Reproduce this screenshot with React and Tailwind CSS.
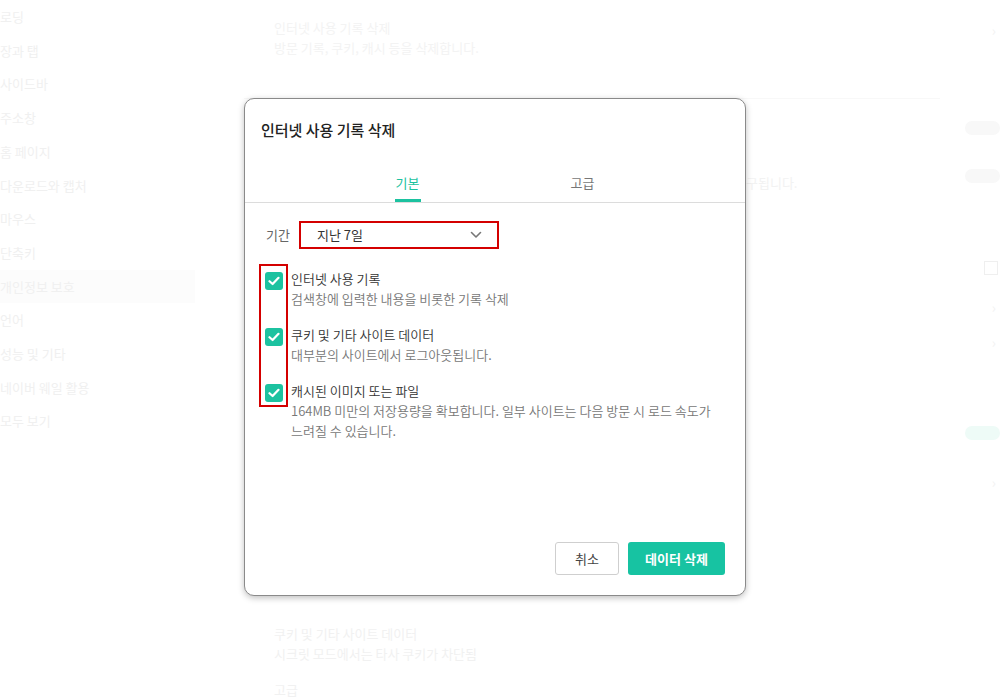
import React, { useState } from "react";

const font = { fontFamily: '"Noto Sans CJK KR", "Noto Sans", sans-serif' };

const sideItems = [
  "로딩", "장과 탭", "사이드바", "주소창", "홈 페이지", "다운로드와 캡처",
  "마우스", "단축키", "개인정보 보호", "언어", "성능 및 기타", "네이버 웨일 활용", "모두 보기",
];

const options = [
  { title: "인터넷 사용 기록", desc: "검색창에 입력한 내용을 비롯한 기록 삭제" },
  { title: "쿠키 및 기타 사이트 데이터", desc: "대부분의 사이트에서 로그아웃됩니다." },
  {
    title: "캐시된 이미지 또는 파일",
    desc: "164MB 미만의 저장용량을 확보합니다. 일부 사이트는 다음 방문 시 로드 속도가 느려질 수 있습니다.",
  },
];

function Check() {
  return (
    <div className="w-[18px] h-[18px] rounded-[3px] bg-[#1cc2a0] flex items-center justify-center">
      <svg width="12" height="10" viewBox="0 0 12 10" fill="none">
        <path d="M1.5 5.2 4.6 8 10.5 1.8" stroke="white" strokeWidth="2.2" strokeLinecap="round" strokeLinejoin="round" />
      </svg>
    </div>
  );
}

function App() {
  const [tab, setTab] = useState("basic");

  return (
    <div className="relative w-[1000px] h-[700px] overflow-hidden bg-white" style={font}>
      {/* faded settings page behind the dialog */}
      <div className="flex h-full">
        <div className="w-[195px] shrink-0 flex flex-col text-[13px] text-[#f0f0f0]">
          {sideItems.map((s, i) => (
            <div key={s} className={`h-[33.7px] flex items-center ${i === 8 ? "bg-[#fcfcfc]" : ""}`}>
              {s}
            </div>
          ))}
        </div>
        <div className="flex-1 pl-[79px] text-[13px] text-[#f3f3f3]">
          <div className="pt-[18px] leading-[20px]">
            <div>인터넷 사용 기록 삭제</div>
            <div>방문 기록, 쿠키, 캐시 등을 삭제합니다.</div>
          </div>
          <div className="mt-[40px] mr-[60px] border-t border-[#f8f8f8] -ml-[30px]" />
        </div>
      </div>

      {/* faded right column */}
      <div className="absolute right-[4px] top-[20px] text-[#f2f2f2] text-[14px]">›</div>
      <div className="absolute right-0 top-[121px] w-[35px] h-[14px] rounded-full bg-[#f8f8f8]" />
      <div className="absolute right-0 top-[169px] w-[35px] h-[14px] rounded-full bg-[#f8f8f8]" />
      <div className="absolute left-[746px] top-[173px] text-[13px] text-[#f2f2f2]">구됩니다.</div>
      <div className="absolute right-[2px] top-[261px] w-[14px] h-[14px] border border-[#efefef]" />
      <div className="absolute right-[4px] top-[297px] text-[#f2f2f2] text-[14px]">›</div>
      <div className="absolute right-[4px] top-[332px] text-[#f2f2f2] text-[14px]">›</div>
      <div className="absolute right-0 top-[426px] w-[35px] h-[14px] rounded-full bg-[#eefbf7]" />
      <div className="absolute right-[4px] top-[472px] text-[#f2f2f2] text-[14px]">›</div>
      <div className="absolute left-[274px] top-[624px] text-[13px] leading-[20px] text-[#f1f1f1]">
        <div>쿠키 및 기타 사이트 데이터</div>
        <div>시크릿 모드에서는 타사 쿠키가 차단됨</div>
        <div className="mt-[16px]">고급</div>
      </div>

      {/* dialog */}
      <div className="absolute left-[244px] top-[98px] w-[502px] h-[498px] bg-white border border-[#8a8a8a] rounded-[10px] shadow-[0_2px_6px_rgba(0,0,0,0.25)] flex flex-col">
        <div className="pl-[16px] pt-[20px] text-[15px] font-medium text-[#222]">인터넷 사용 기록 삭제</div>

        <div className="mt-[31px] flex justify-center border-b border-[#dcdcdc]">
          <button
            onClick={() => setTab("basic")}
            className={`w-[175px] flex flex-col items-center text-[13px] ${tab === "basic" ? "text-[#1cc2a0]" : "text-[#777]"}`}
          >
            <span className="leading-[20px]">기본</span>
            <span className={`mt-[6px] w-[26px] h-[3px] ${tab === "basic" ? "bg-[#1cc2a0]" : "bg-transparent"}`} />
          </button>
          <button
            onClick={() => setTab("adv")}
            className={`w-[175px] flex flex-col items-center text-[13px] ${tab === "adv" ? "text-[#1cc2a0]" : "text-[#777]"}`}
          >
            <span className="leading-[20px]">고급</span>
            <span className={`mt-[6px] w-[26px] h-[3px] ${tab === "adv" ? "bg-[#1cc2a0]" : "bg-transparent"}`} />
          </button>
        </div>

        <div className="pl-[21px] pt-[18px] flex items-center">
          <span className="text-[13px] text-[#666]">기간</span>
          <div className="ml-[9px] w-[200px] h-[28px] border-2 border-[#d40000] flex items-center justify-between pl-[16px] pr-[15px]">
            <span className="text-[13px] text-[#333]">지난 7일</span>
            <svg width="12" height="8" viewBox="0 0 12 8" fill="none">
              <path d="M1.5 1.5 6 6l4.5-4.5" stroke="#777" strokeWidth="1.6" strokeLinecap="round" strokeLinejoin="round" />
            </svg>
          </div>
        </div>

        <div className="mt-[15px] ml-[14px] flex">
          <div className="w-[29px] h-[143px] border-2 border-[#d40000] flex flex-col items-center pt-[6px] gap-[38px]">
            <Check />
            <Check />
            <Check />
          </div>
          <div className="ml-[3px] mt-[5px] flex flex-col gap-[16px] text-[13px] leading-[20px] w-[432px] font-[350]">
            {options.map((o) => (
              <div key={o.title}>
                <div className="text-[#333]">{o.title}</div>
                <div className="text-[#777]">{o.desc}</div>
              </div>
            ))}
          </div>
        </div>

        <div className="mt-auto mb-[20px] mr-[20px] flex justify-end gap-[9px]">
          <button className="w-[64px] h-[33px] border border-[#cfcfcf] rounded-[3px] text-[13px] text-[#444] bg-white">취소</button>
          <button className="w-[97px] h-[33px] rounded-[3px] text-[13px] font-bold text-white bg-[#17c3a2]">데이터 삭제</button>
        </div>
      </div>
    </div>
  );
}

export default App;
